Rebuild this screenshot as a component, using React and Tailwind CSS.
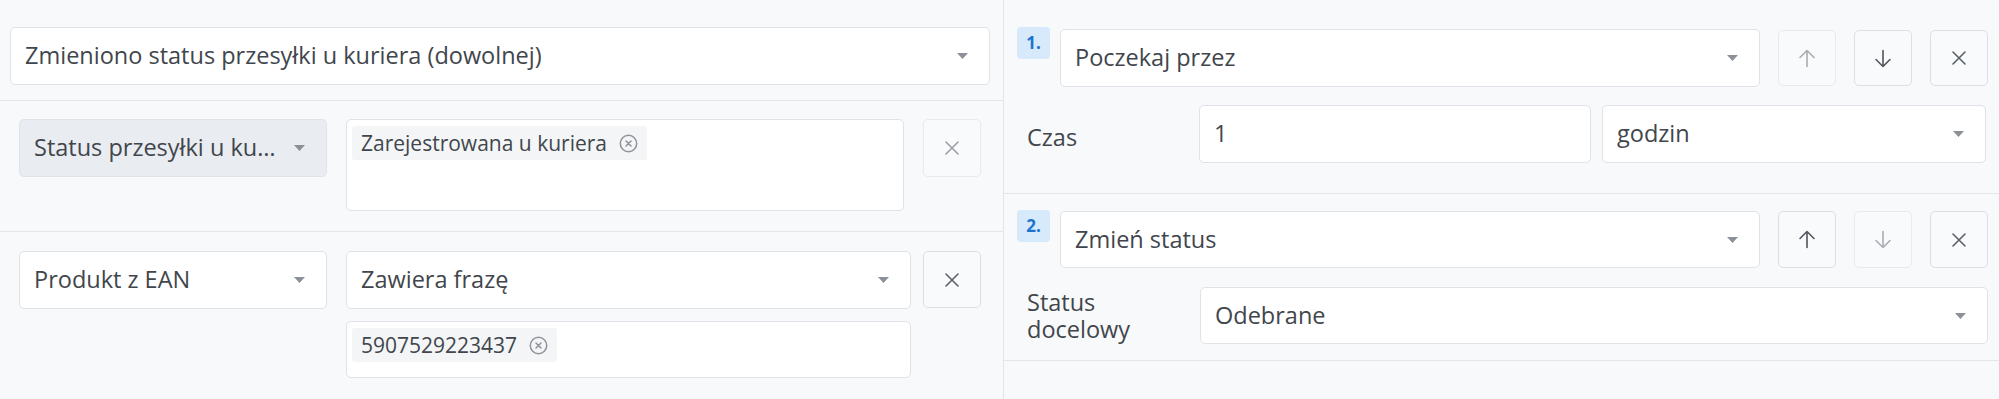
import React from "react";

const Caret = () => (
  <svg width="11" height="6" viewBox="0 0 11 6" className="shrink-0">
    <polygon points="0,0 11,0 5.5,6" fill="#8c9197" />
  </svg>
);

const Cross = ({ color = "#5b6066", size = 14 }) => (
  <svg width={size} height={size} viewBox="0 0 14 14" fill="none">
    <path d="M1 1L13 13M13 1L1 13" stroke={color} strokeWidth="1.6" strokeLinecap="round" />
  </svg>
);

const Arrow = ({ down, color }) => (
  <svg width="18" height="19" viewBox="0 0 18 19" fill="none" className={down ? "rotate-180" : ""}>
    <path d="M9 1.5V17.5M2 8.5L9 1.5L16 8.5" stroke={color} strokeWidth="1.6" strokeLinecap="round" strokeLinejoin="round" />
  </svg>
);

const ChipClose = () => (
  <svg width="19" height="19" viewBox="0 0 19 19" fill="none">
    <circle cx="9.5" cy="9.5" r="8.2" stroke="#8f949a" strokeWidth="1.5" />
    <path d="M7 7L12 12M12 7L7 12" stroke="#8f949a" strokeWidth="1.5" strokeLinecap="round" />
  </svg>
);

const Select = ({ children, className = "", gray }) => (
  <div
    className={`flex items-center justify-between gap-3 rounded-[5px] border border-[#dfe2e6] pl-[14px] pr-[21px] ${
      gray ? "bg-[#e9ecf0]" : "bg-white"
    } ${className}`}
  >
    <span className="truncate">{children}</span>
    <Caret />
  </div>
);

const Chip = ({ children }) => (
  <div className="inline-flex items-center gap-[12px] rounded-[3px] bg-[#f4f5f7] px-[9px] py-[3px] text-[21px] leading-[28px]">
    <span>{children}</span>
    <ChipClose />
  </div>
);

const IconBtn = ({ children, className = "", faded }) => (
  <button
    className={`flex w-[58px] shrink-0 items-center justify-center rounded-[5px] border ${
      faded ? "border-[#e8eaed]" : "border-[#dcdfe3]"
    } bg-[#f9fafb] ${className}`}
  >
    {children}
  </button>
);

const Badge = ({ n }) => (
  <div className="flex h-[32px] w-[33px] shrink-0 items-center justify-center rounded-[4px] bg-[#d6eafc] text-[17px] font-bold text-[#1c74cf]">
    {n}.
  </div>
);

export default function App() {
  return (
    <div className="flex h-[399px] w-full overflow-hidden bg-[#f8f9fa] font-['Open_Sans',sans-serif] text-[23.5px] text-[#41464c]">
      {/* Trigger and conditions */}
      <div className="w-[1004px] shrink-0 border-r border-[#e3e5e8]">
        <div className="border-b border-[#e3e5e8] pb-[15px] pl-[10px] pr-[13px] pt-[27px]">
          <Select className="h-[58px] w-full">Zmieniono status przesyłki u kuriera (dowolnej)</Select>
        </div>

        <div className="flex items-start border-b border-[#e3e5e8] pb-[20px] pl-[19px] pt-[18px]">
          <Select gray className="h-[58px] w-[308px]">Status przesyłki u kuriera</Select>
          <div className="ml-[19px] w-[565px]">
            <div className="h-[92px] w-[558px] rounded-[5px] border border-[#dfe2e6] bg-white p-[5px]">
              <Chip>Zarejestrowana u kuriera</Chip>
            </div>
          </div>
          <IconBtn faded className="ml-[12px] h-[58px]">
            <Cross color="#9a9fa5" />
          </IconBtn>
        </div>

        <div className="flex items-start pl-[19px] pt-[19px]">
          <Select className="h-[58px] w-[308px]">Produkt z EAN</Select>
          <div className="ml-[19px] flex w-[565px] flex-col gap-[12px]">
            <Select className="h-[58px] w-full">Zawiera frazę</Select>
            <div className="h-[57px] w-full rounded-[5px] border border-[#dfe2e6] bg-white p-[5px]">
              <Chip>5907529223437</Chip>
            </div>
          </div>
          <IconBtn className="ml-[12px] h-[57px]">
            <Cross />
          </IconBtn>
        </div>
      </div>

      {/* Actions */}
      <div className="flex-1">
        <div className="border-b border-[#e3e5e8] pb-[30px] pt-[27px]">
          <div className="flex items-start pl-[13px]">
            <Badge n={1} />
            <Select className="ml-[10px] mt-[2px] h-[58px] w-[700px]">Poczekaj przez</Select>
            <div className="ml-[18px] mt-[3px] flex gap-[18px]">
              <IconBtn faded className="h-[56px]">
                <Arrow color="#a9adb2" />
              </IconBtn>
              <IconBtn className="h-[56px]">
                <Arrow down color="#51565c" />
              </IconBtn>
              <IconBtn className="h-[56px]">
                <Cross />
              </IconBtn>
            </div>
          </div>
          <div className="mt-[18px] flex items-center pl-[23px]">
            <div className="w-[172px] shrink-0 pt-[7px]">Czas</div>
            <div className="flex h-[58px] w-[392px] items-center rounded-[5px] border border-[#dfe2e6] bg-white px-[14px]">
              1
            </div>
            <Select className="ml-[11px] h-[58px] w-[384px]">godzin</Select>
          </div>
        </div>

        <div className="border-b border-[#e3e5e8] pb-[16px] pt-[16px]">
          <div className="flex items-start pl-[13px]">
            <Badge n={2} />
            <Select className="ml-[10px] mt-[1px] h-[57px] w-[700px]">Zmień status</Select>
            <div className="ml-[18px] mt-[1px] flex gap-[18px]">
              <IconBtn className="h-[57px]">
                <Arrow color="#51565c" />
              </IconBtn>
              <IconBtn faded className="h-[57px]">
                <Arrow down color="#a9adb2" />
              </IconBtn>
              <IconBtn className="h-[57px]">
                <Cross />
              </IconBtn>
            </div>
          </div>
          <div className="mt-[19px] flex items-center pl-[23px]">
            <div className="w-[173px] shrink-0 leading-[27px]">
              <div className="w-[100px]">Status docelowy</div>
            </div>
            <Select className="h-[57px] w-[788px]">Odebrane</Select>
          </div>
        </div>
      </div>
    </div>
  );
}
